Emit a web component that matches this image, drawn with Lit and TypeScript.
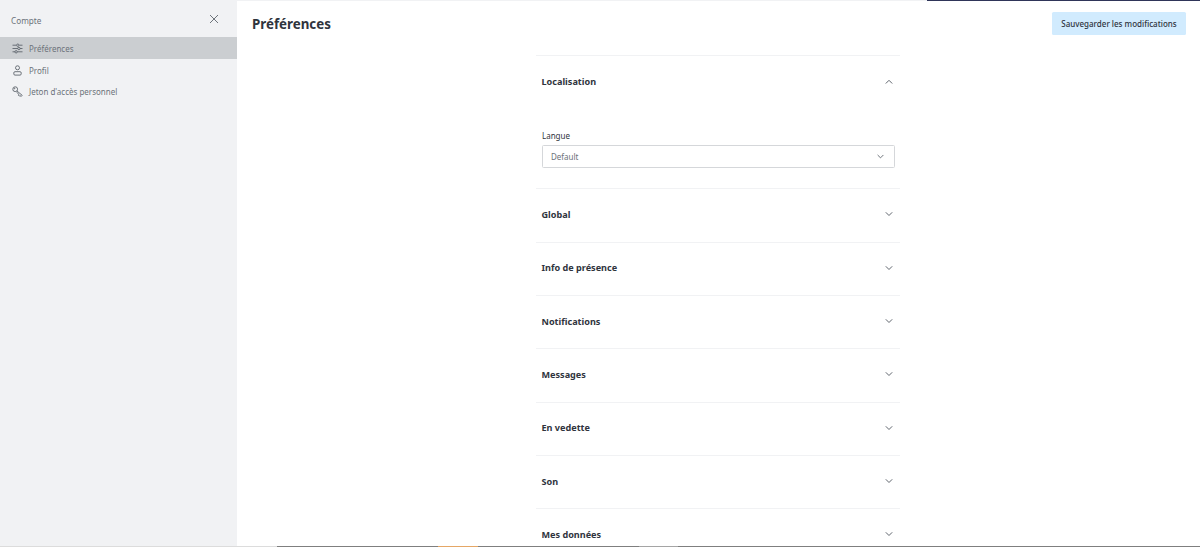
import { LitElement, html, css, svg } from "lit";
import { customElement } from "lit/decorators.js";

const chevron = (up = false) => html`<svg class="chev ${up ? "up" : ""}" width="10" height="10" viewBox="0 0 10 10" fill="none" stroke="#5f656d" stroke-width="1">${up ? svg`<path d="M1.800 6.500 5 3.300l3.200 3.200"/>` : svg`<path d="M1.800 3.300 5 6.500l3.200-3.200"/>`}</svg>`;

const sections = ["Global", "Info de présence", "Notifications", "Messages", "En vedette", "Son", "Mes données"];

@customElement("app-root")
export class AppRoot extends LitElement {
  static styles = css`
    :host { display: block; width: 1200px; height: 547px; overflow: hidden; background: #fff; font-family: "Noto Sans", "Open Sans", sans-serif; color: #2f343d; }
    .frame { display: flex; flex-direction: column; height: 547px; }
    .top { display: flex; height: 1px; flex: none; background: #f1f2f4; }
    .top i { margin-left: auto; width: 273px; background: #2f3559; }
    .body { flex: 1; min-height: 0; display: flex; overflow: hidden; }
    .side { width: 237px; flex: none; background: #f1f2f4; display: flex; flex-direction: column; }
    .side-head { height: 36px; box-sizing: border-box; padding: 2px 18px 0 11px; flex: none; display: flex; align-items: center; justify-content: space-between; font-size: 8.2px; color: #6c727a; }
    .side-head svg { margin-bottom: 2px; }
    .row { height: 21.8px; box-sizing: border-box; padding: 1px 0 0 12px; display: flex; align-items: center; gap: 6px; font-size: 8px; color: #6c727a; }
    .row.active { background: #cbced1; }
    .row svg { flex: none; width: 11px; height: 11px; }
    .main { flex: 1; min-width: 0; display: flex; flex-direction: column; }
    .main-head { height: 45px; box-sizing: border-box; flex: none; display: flex; align-items: flex-start; justify-content: space-between; padding: 11px 14px 0 15px; }
    h1 { margin: 0; font-size: 13.33px; line-height: 24px; font-weight: 700; color: #2f343d; }
    button { height: 23px; width: 134px; border: 0; border-radius: 1.5px; background: #d1ebfe; color: #2f343d; font: 500 8px "Noto Sans", sans-serif; padding: 0; }
    .list { width: 364px; margin-left: 299px; margin-top: 9px; }
    .item { border-top: 1px solid #f1f2f4; box-sizing: border-box; }
    .item-head { height: 52.33px; display: flex; align-items: center; justify-content: space-between; padding: 0 6px 0 5.500px; font-size: 9.1px; font-weight: 700; }
    .item-head span { margin-bottom: 2px; }
    .item-head .chev { margin-bottom: 2px; }
    .item-head .chev.up { margin-bottom: 0; }
    .content { padding: 22px 5px 18px 6px; height: 80px; box-sizing: border-box; }
    label { display: block; font-size: 8px; line-height: 12px; color: #2f343d; margin-bottom: 3px; }
    .select { height: 23px; box-sizing: border-box; border: 1px solid #d5d7da; border-radius: 1.5px; display: flex; align-items: center; justify-content: space-between; padding: 0 9px 0 8px; font-size: 8px; color: #6c727a; background: #fff; }
    .select .chev { width: 9px; height: 9px; }
    .bottom { height: 1px; flex: none; display: flex; background: #7f7f7f; }
    .bottom i { display: block; }
    .b1 { width: 277px; background: #dcdcdc; }
    .b2 { width: 161px; }
    .b3 { width: 40px; background: #e5a766; }
    .b4 { width: 161px; }
    .b5 { width: 39px; background: #a5a5a5; }
  `;

  render() {
    return html`<div class="frame">
      <div class="top"><i></i></div>
      <div class="body">
        <aside class="side">
          <div class="side-head"><span>Compte</span>
            <svg width="10" height="10" viewBox="0 0 10 10" fill="none" stroke="#5f656d" stroke-width="0.9"><path d="M1 1l8 8M9 1l-8 8"/></svg>
          </div>
          <div class="row active">
            <svg viewBox="0 0 11 11" fill="none" stroke="#5f656d" stroke-width="0.9"><path d="M.5 2.200h3.800M7.400 2.200h3.100M.5 5.500h5.400M8 5.500h2.500M.5 8.800h2.600M5.200 8.800h5.300"/><circle cx="5.800" cy="2.200" r="1.200"/><circle cx="6.900" cy="5.500" r="1.200"/><circle cx="4.100" cy="8.800" r="1.200"/></svg>
            <span>Préférences</span>
          </div>
          <div class="row">
            <svg viewBox="0 0 11 11" fill="none" stroke="#5f656d" stroke-width="0.9"><circle cx="5.500" cy="2.800" r="2"/><rect x="1.800" y="6.700" width="7.400" height="3.400" rx="1.200"/></svg>
            <span>Profil</span>
          </div>
          <div class="row">
            <svg viewBox="0 0 11 11" fill="none" stroke="#5f656d" stroke-width="0.9"><circle cx="3.200" cy="3.200" r="2.400"/><circle cx="2.500" cy="2.500" r=".4"/><path d="M5 5l5.200 4.300-1 1.200-1.200-1-.7.6-1-1 .4-.8L4.800 6.200"/></svg>
            <span>Jeton d'accès personnel</span>
          </div>
        </aside>
        <main class="main">
          <div class="main-head"><h1>Préférences</h1><button>Sauvegarder les modifications</button></div>
          <div class="list">
            <section class="item">
              <div class="item-head"><span>Localisation</span>${chevron(true)}</div>
              <div class="content">
                <label>Langue</label>
                <div class="select"><span>Default</span>${chevron()}</div>
              </div>
            </section>
            ${sections.map((s) => html`<section class="item"><div class="item-head"><span>${s}</span>${chevron()}</div></section>`)}
          </div>
        </main>
      </div>
      <div class="bottom"><i class="b1"></i><i class="b2"></i><i class="b3"></i><i class="b4"></i><i class="b5"></i></div>
    </div>`;
  }
}
